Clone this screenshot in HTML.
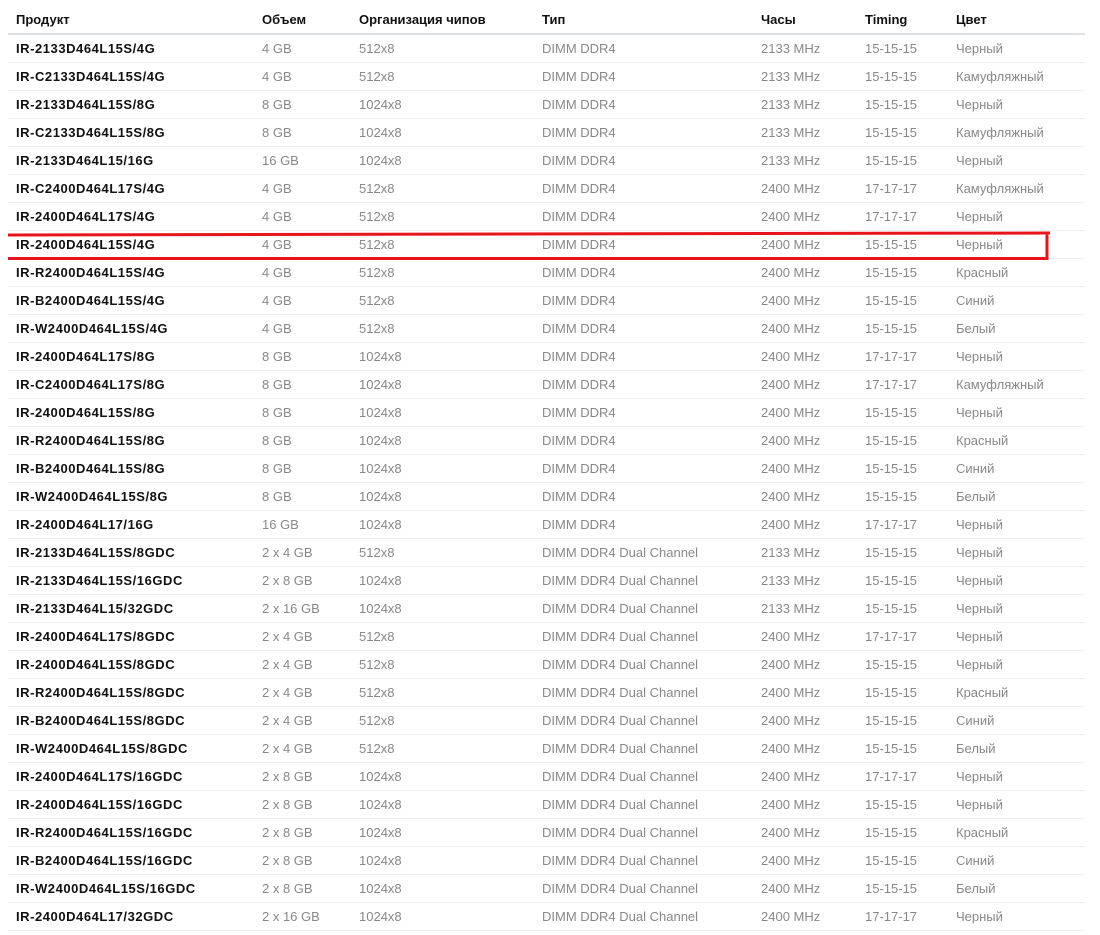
<!DOCTYPE html>
<html><head><meta charset="utf-8"><style>
body{margin:0;background:#fff;width:1100px;height:935px;overflow:hidden;font-family:"Liberation Sans",sans-serif;font-size:13px;position:relative}
table{position:absolute;left:8px;top:6px;width:1077px;border-collapse:collapse}
td,th{height:27px;padding:0;text-align:left;border-bottom:1px solid #eceef1;color:#888;white-space:nowrap}
th{color:#111;font-weight:bold;height:27px;border-bottom:2px solid #dde1e6}
td:first-child,th:first-child{padding-left:8px;width:246px}
td:first-child{color:#111;font-weight:bold;letter-spacing:0.55px}
.c2{width:97px}.c3{width:183px}.c4{width:219px}.c5{width:104px}.c6{width:91px}
</style></head><body>
<table>
<tr><th style="letter-spacing:0">Продукт</th><th class="c2">Объем</th><th class="c3">Организация чипов</th><th class="c4">Тип</th><th class="c5">Часы</th><th class="c6">Timing</th><th>Цвет</th></tr>
<tr><td>IR-2133D464L15S/4G</td><td>4 GB</td><td>512x8</td><td>DIMM DDR4</td><td>2133 MHz</td><td>15-15-15</td><td>Черный</td></tr>
<tr><td>IR-C2133D464L15S/4G</td><td>4 GB</td><td>512x8</td><td>DIMM DDR4</td><td>2133 MHz</td><td>15-15-15</td><td>Камуфляжный</td></tr>
<tr><td>IR-2133D464L15S/8G</td><td>8 GB</td><td>1024x8</td><td>DIMM DDR4</td><td>2133 MHz</td><td>15-15-15</td><td>Черный</td></tr>
<tr><td>IR-C2133D464L15S/8G</td><td>8 GB</td><td>1024x8</td><td>DIMM DDR4</td><td>2133 MHz</td><td>15-15-15</td><td>Камуфляжный</td></tr>
<tr><td>IR-2133D464L15/16G</td><td>16 GB</td><td>1024x8</td><td>DIMM DDR4</td><td>2133 MHz</td><td>15-15-15</td><td>Черный</td></tr>
<tr><td>IR-C2400D464L17S/4G</td><td>4 GB</td><td>512x8</td><td>DIMM DDR4</td><td>2400 MHz</td><td>17-17-17</td><td>Камуфляжный</td></tr>
<tr><td>IR-2400D464L17S/4G</td><td>4 GB</td><td>512x8</td><td>DIMM DDR4</td><td>2400 MHz</td><td>17-17-17</td><td>Черный</td></tr>
<tr><td>IR-2400D464L15S/4G</td><td>4 GB</td><td>512x8</td><td>DIMM DDR4</td><td>2400 MHz</td><td>15-15-15</td><td>Черный</td></tr>
<tr><td>IR-R2400D464L15S/4G</td><td>4 GB</td><td>512x8</td><td>DIMM DDR4</td><td>2400 MHz</td><td>15-15-15</td><td>Красный</td></tr>
<tr><td>IR-B2400D464L15S/4G</td><td>4 GB</td><td>512x8</td><td>DIMM DDR4</td><td>2400 MHz</td><td>15-15-15</td><td>Синий</td></tr>
<tr><td>IR-W2400D464L15S/4G</td><td>4 GB</td><td>512x8</td><td>DIMM DDR4</td><td>2400 MHz</td><td>15-15-15</td><td>Белый</td></tr>
<tr><td>IR-2400D464L17S/8G</td><td>8 GB</td><td>1024x8</td><td>DIMM DDR4</td><td>2400 MHz</td><td>17-17-17</td><td>Черный</td></tr>
<tr><td>IR-C2400D464L17S/8G</td><td>8 GB</td><td>1024x8</td><td>DIMM DDR4</td><td>2400 MHz</td><td>17-17-17</td><td>Камуфляжный</td></tr>
<tr><td>IR-2400D464L15S/8G</td><td>8 GB</td><td>1024x8</td><td>DIMM DDR4</td><td>2400 MHz</td><td>15-15-15</td><td>Черный</td></tr>
<tr><td>IR-R2400D464L15S/8G</td><td>8 GB</td><td>1024x8</td><td>DIMM DDR4</td><td>2400 MHz</td><td>15-15-15</td><td>Красный</td></tr>
<tr><td>IR-B2400D464L15S/8G</td><td>8 GB</td><td>1024x8</td><td>DIMM DDR4</td><td>2400 MHz</td><td>15-15-15</td><td>Синий</td></tr>
<tr><td>IR-W2400D464L15S/8G</td><td>8 GB</td><td>1024x8</td><td>DIMM DDR4</td><td>2400 MHz</td><td>15-15-15</td><td>Белый</td></tr>
<tr><td>IR-2400D464L17/16G</td><td>16 GB</td><td>1024x8</td><td>DIMM DDR4</td><td>2400 MHz</td><td>17-17-17</td><td>Черный</td></tr>
<tr><td>IR-2133D464L15S/8GDC</td><td>2 x 4 GB</td><td>512x8</td><td>DIMM DDR4 Dual Channel</td><td>2133 MHz</td><td>15-15-15</td><td>Черный</td></tr>
<tr><td>IR-2133D464L15S/16GDC</td><td>2 x 8 GB</td><td>1024x8</td><td>DIMM DDR4 Dual Channel</td><td>2133 MHz</td><td>15-15-15</td><td>Черный</td></tr>
<tr><td>IR-2133D464L15/32GDC</td><td>2 x 16 GB</td><td>1024x8</td><td>DIMM DDR4 Dual Channel</td><td>2133 MHz</td><td>15-15-15</td><td>Черный</td></tr>
<tr><td>IR-2400D464L17S/8GDC</td><td>2 x 4 GB</td><td>512x8</td><td>DIMM DDR4 Dual Channel</td><td>2400 MHz</td><td>17-17-17</td><td>Черный</td></tr>
<tr><td>IR-2400D464L15S/8GDC</td><td>2 x 4 GB</td><td>512x8</td><td>DIMM DDR4 Dual Channel</td><td>2400 MHz</td><td>15-15-15</td><td>Черный</td></tr>
<tr><td>IR-R2400D464L15S/8GDC</td><td>2 x 4 GB</td><td>512x8</td><td>DIMM DDR4 Dual Channel</td><td>2400 MHz</td><td>15-15-15</td><td>Красный</td></tr>
<tr><td>IR-B2400D464L15S/8GDC</td><td>2 x 4 GB</td><td>512x8</td><td>DIMM DDR4 Dual Channel</td><td>2400 MHz</td><td>15-15-15</td><td>Синий</td></tr>
<tr><td>IR-W2400D464L15S/8GDC</td><td>2 x 4 GB</td><td>512x8</td><td>DIMM DDR4 Dual Channel</td><td>2400 MHz</td><td>15-15-15</td><td>Белый</td></tr>
<tr><td>IR-2400D464L17S/16GDC</td><td>2 x 8 GB</td><td>1024x8</td><td>DIMM DDR4 Dual Channel</td><td>2400 MHz</td><td>17-17-17</td><td>Черный</td></tr>
<tr><td>IR-2400D464L15S/16GDC</td><td>2 x 8 GB</td><td>1024x8</td><td>DIMM DDR4 Dual Channel</td><td>2400 MHz</td><td>15-15-15</td><td>Черный</td></tr>
<tr><td>IR-R2400D464L15S/16GDC</td><td>2 x 8 GB</td><td>1024x8</td><td>DIMM DDR4 Dual Channel</td><td>2400 MHz</td><td>15-15-15</td><td>Красный</td></tr>
<tr><td>IR-B2400D464L15S/16GDC</td><td>2 x 8 GB</td><td>1024x8</td><td>DIMM DDR4 Dual Channel</td><td>2400 MHz</td><td>15-15-15</td><td>Синий</td></tr>
<tr><td>IR-W2400D464L15S/16GDC</td><td>2 x 8 GB</td><td>1024x8</td><td>DIMM DDR4 Dual Channel</td><td>2400 MHz</td><td>15-15-15</td><td>Белый</td></tr>
<tr><td>IR-2400D464L17/32GDC</td><td>2 x 16 GB</td><td>1024x8</td><td>DIMM DDR4 Dual Channel</td><td>2400 MHz</td><td>17-17-17</td><td>Черный</td></tr>
</table>
<svg style="position:absolute;left:0;top:0" width="1100" height="935">
<path d="M8 235 L1050 233 M8 258.5 L1047 258.5 M1047 234 L1047 260" stroke="#e8141c" stroke-width="3" fill="none"/>
</svg>
</body></html>
